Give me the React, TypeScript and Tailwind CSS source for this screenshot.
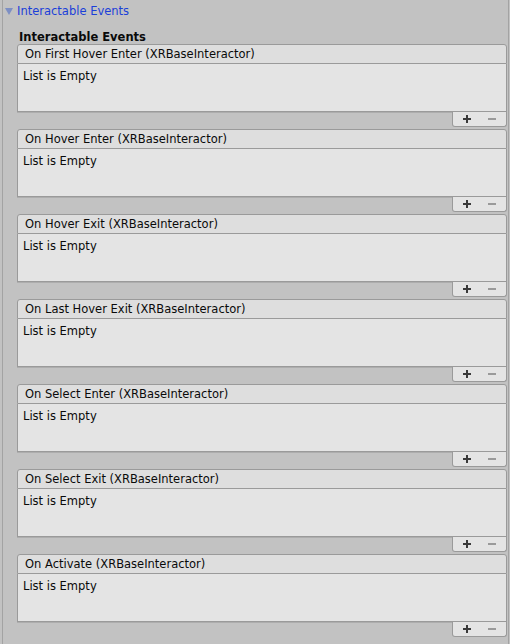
const EVENTS = [
  "On First Hover Enter",
  "On Hover Enter",
  "On Hover Exit",
  "On Last Hover Exit",
  "On Select Enter",
  "On Select Exit",
  "On Activate",
];

function EventList({ name }: { name: string }) {
  return (
    <div className="mb-[2px]">
      <div className="h-[20px] flex items-center pl-[7px] pt-[2px] bg-[#dedede] border border-[#9a9a9a] rounded-t-[3px] text-[11.5px] text-[#0a0a0a]">
        {name} (XRBaseInteractor)
      </div>
      <div className="h-[48px] bg-[#e4e4e4] border-x border-b border-[#9a9a9a] pl-[5px] pt-[5px] text-[11.5px] text-[#0a0a0a] leading-[14px] shadow-[0_1px_0_#adadad]">
        List is Empty
      </div>
      <div className="flex justify-end">
        <div className="w-[55px] h-[15px] bg-[#e4e4e4] border-x border-b border-[#9a9a9a] rounded-b-[3px] flex items-center">
          <span className="ml-[10px] relative w-[8px] h-[8px]">
            <span className="absolute left-0 top-[3px] w-[8px] h-[2px] bg-[#3a3a3a]" />
            <span className="absolute left-[3px] top-0 w-[2px] h-[8px] bg-[#3a3a3a]" />
          </span>
          <span className="ml-[17px] w-[8px] h-[2px] bg-[#9a9a9a]" />
        </div>
      </div>
    </div>
  );
}

export default function App() {
  return (
    <div className="w-[510px] h-[644px] bg-[#c2c2c2] pl-[2px] pr-[1px] font-['DejaVu_Sans',sans-serif] overflow-hidden">
      <div className="h-full border-x border-[#a3a3a3]">
        <div className="h-[22px] flex items-center pt-[1px]">
          <svg width="8" height="7" viewBox="0 0 8 7" className="ml-[2px]">
            <path d="M0 0 H8 L4 7 Z" fill="#7d8fc4" />
          </svg>
          <span className="ml-[4px] text-[11.5px] text-[#1b3fd9]">Interactable Events</span>
        </div>
        <div className="pl-[14px] pr-[1px]">
          <div className="h-[22px] pl-[2px] pt-[8px] leading-[14px] text-[11.5px] font-bold text-[#0a0a0a]">
            Interactable Events
          </div>
          {EVENTS.map((e) => (
            <EventList key={e} name={e} />
          ))}
        </div>
      </div>
    </div>
  );
}
